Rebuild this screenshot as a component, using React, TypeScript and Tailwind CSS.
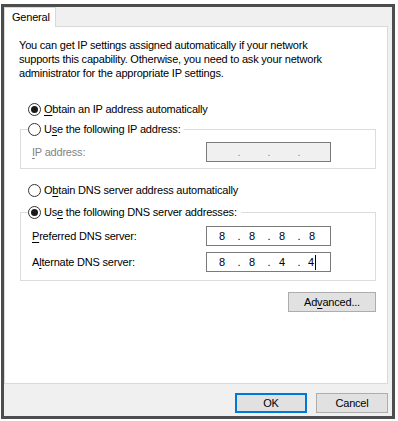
import React from 'react';

type RadioProps = { checked?: boolean; children: React.ReactNode };

const Radio = ({ checked }: { checked?: boolean }) => (
  <span className="flex h-[13px] w-[13px] shrink-0 items-center justify-center rounded-full border border-[#333333] bg-white">
    {checked && <span className="h-[7px] w-[7px] rounded-full bg-[#1a1a1a]" />}
  </span>
);

const RadioLabel = ({ checked, children }: RadioProps) => (
  <label className="flex h-[16px] items-center gap-[3px] whitespace-nowrap">
    <Radio checked={checked} />
    <span>{children}</span>
  </label>
);

const Key = ({ children }: { children: React.ReactNode }) => (
  <span className="underline decoration-1 underline-offset-[2px]">{children}</span>
);

interface IpBoxProps {
  parts: string[];
  disabled?: boolean;
  caret?: boolean;
}

const IpBox = ({ parts, disabled, caret }: IpBoxProps) => (
  <div
    className={`flex h-[20px] w-[125px] shrink-0 items-center border border-[#7a7a7a] tracking-normal ${
      disabled ? 'bg-[#f0f0f0] text-[#8a8a8a]' : 'bg-white text-black'
    }`}
  >
    {[0, 1, 2, 3].map(i => (
      <React.Fragment key={i}>
        <span className="w-[30px] text-center">
          {parts[i]}
          {caret && i === 3 && <span className="ml-[1px] inline-block h-[15px] w-[1px] bg-black align-middle" />}
        </span>
        {i < 3 && <span className="-mr-[4px] w-[4px] text-center">.</span>}
      </React.Fragment>
    ))}
  </div>
);

export default function App() {
  return (
    <div className="min-h-[421px] w-[398px] bg-white pl-[1px] pt-[4px] font-['Liberation_Sans',Arial,sans-serif] text-[11px] tracking-[-0.2px] text-black">
      <div className="flex h-[415px] w-[394px] flex-col border-[3px] border-[#4d4d4d] bg-[#f0f0f0]">
        {/* tab strip */}
        <div className="flex h-[19px] shrink-0 items-end">
          <div className="relative z-10 -mb-[1px] flex h-[20px] w-[52px] items-center border border-b-0 border-[#d9d9d9] bg-white pl-[7px]">
            General
          </div>
        </div>

        {/* page */}
        <div className="mr-[4px] flex h-[358px] shrink-0 flex-col border border-[#d9d9d9] bg-white pl-[14px] pr-[11px] pt-[11px]">
          <p className="leading-[14px]">
            You can get IP settings assigned automatically if your network
            <br />
            supports this capability. Otherwise, you need to ask your network
            <br />
            administrator for the appropriate IP settings.
          </p>

          <div className="ml-[9px] mt-[21px]">
            <RadioLabel checked>
              <Key>O</Key>btain an IP address automatically
            </RadioLabel>
          </div>

          <fieldset className="ml-[1px] mt-[4px] min-w-0 border border-[#dcdcdc] p-0">
            <legend className="ml-[7px] p-0 pr-[4px]">
              <RadioLabel>
                U<Key>s</Key>e the following IP address:
              </RadioLabel>
            </legend>
            <div className="flex items-center justify-between pb-[6px] pl-[11px] pr-[44px] pt-[5px]">
              <span className="text-[#838383]">
                <Key>I</Key>P address:
              </span>
              <IpBox parts={['', '', '', '']} disabled />
            </div>
          </fieldset>

          <div className="ml-[9px] mt-[13px]">
            <RadioLabel>
              O<Key>b</Key>tain DNS server address automatically
            </RadioLabel>
          </div>

          <fieldset className="ml-[1px] mt-[6px] min-w-0 border border-[#dcdcdc] p-0">
            <legend className="ml-[7px] p-0 pr-[4px]">
              <RadioLabel checked>
                Us<Key>e</Key> the following DNS server addresses:
              </RadioLabel>
            </legend>
            <div className="flex flex-col gap-[6px] pb-[8px] pl-[11px] pr-[44px] pt-[6px]">
              <div className="flex items-center justify-between">
                <span>
                  <Key>P</Key>referred DNS server:
                </span>
                <IpBox parts={['8', '8', '8', '8']} />
              </div>
              <div className="flex items-center justify-between">
                <span>
                  A<Key>l</Key>ternate DNS server:
                </span>
                <IpBox parts={['8', '8', '4', '4']} caret />
              </div>
            </div>
          </fieldset>

          <div className="mt-[11px] flex justify-end">
            <button className="h-[20px] w-[88px] border border-[#adadad] bg-[#e1e1e1] text-center">
              Ad<Key>v</Key>anced...
            </button>
          </div>
        </div>

        {/* buttons */}
        <div className="flex flex-1 items-start justify-end gap-[9px] pr-[4px] pt-[9px]">
          <button className="h-[20px] w-[72px] border-2 border-[#0078d7] bg-[#e1e1e1]">OK</button>
          <button className="h-[20px] w-[72px] border border-[#adadad] bg-[#e1e1e1]">Cancel</button>
        </div>
      </div>
    </div>
  );
}
